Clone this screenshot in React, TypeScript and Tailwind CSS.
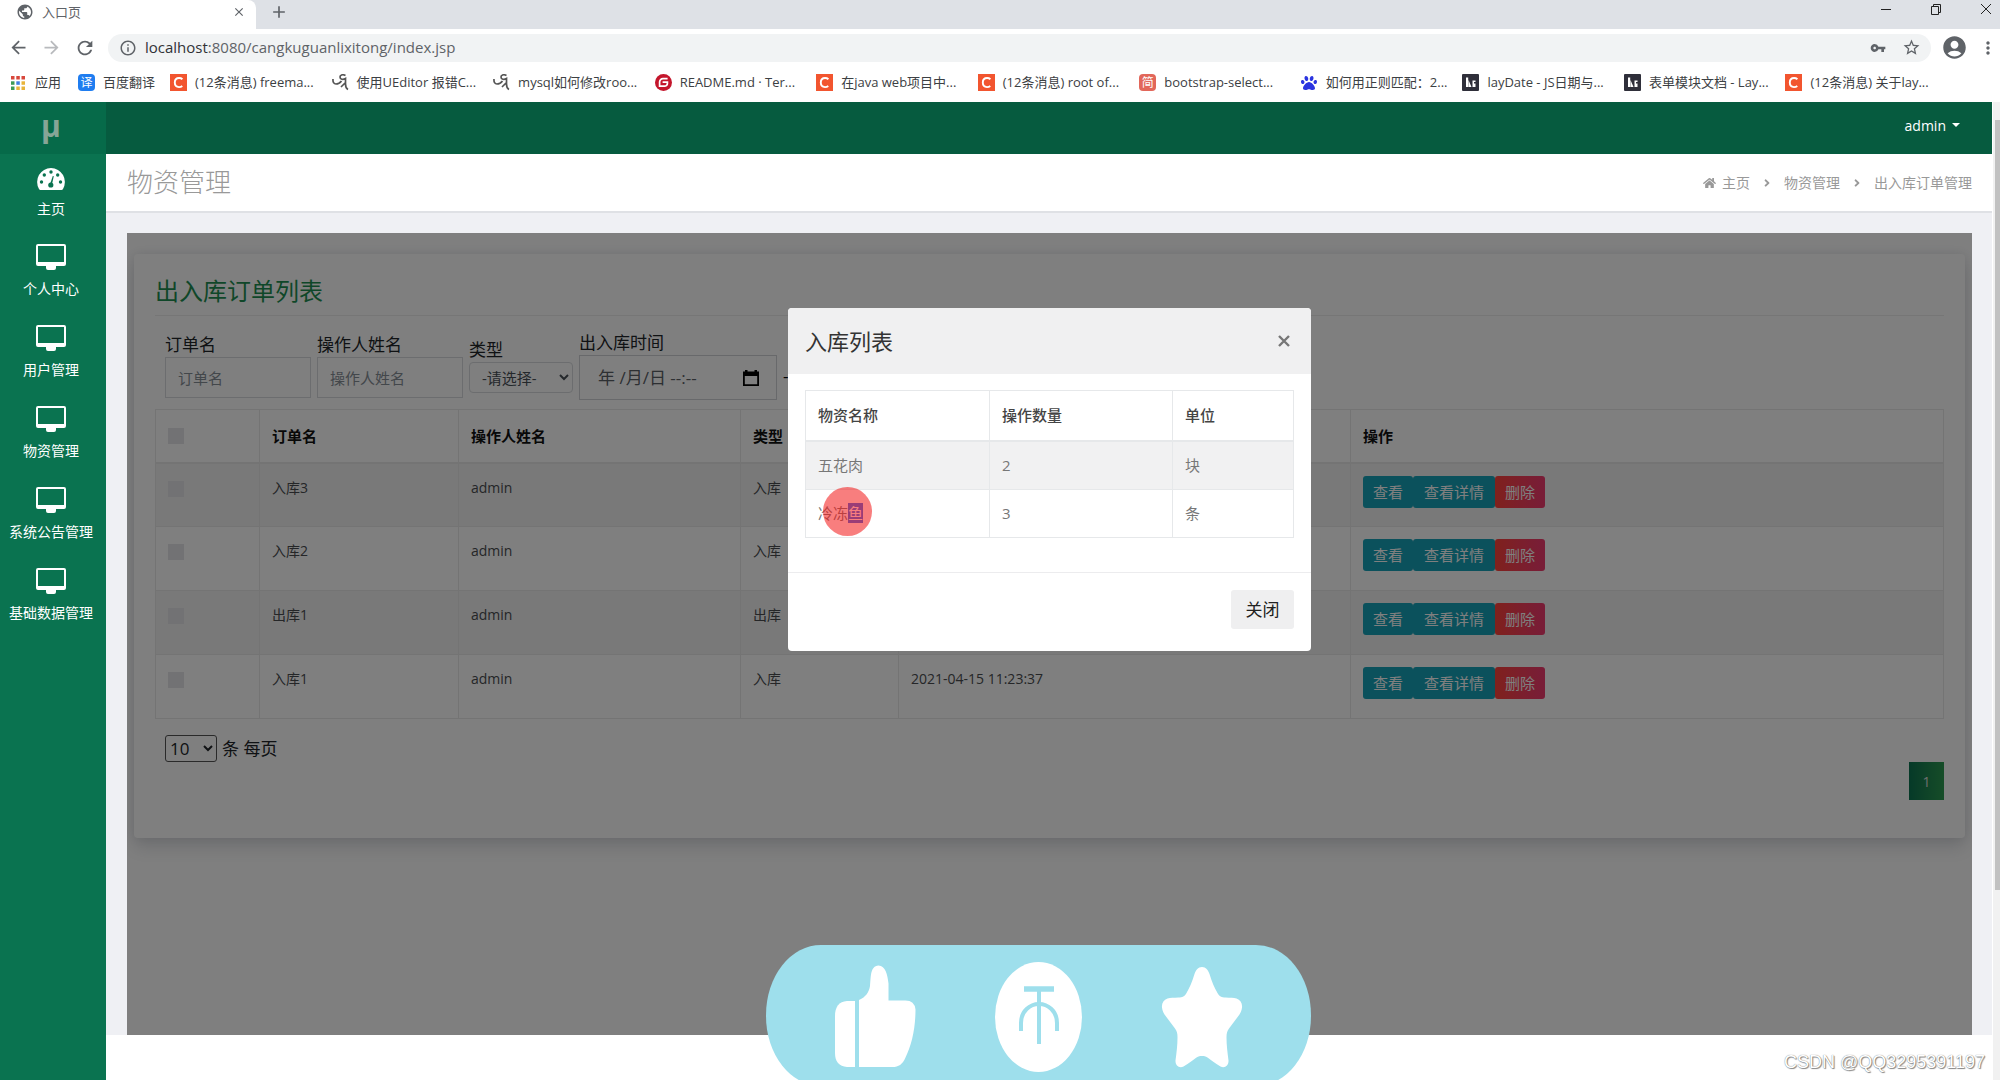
import { useState } from "react";
import type { ReactNode } from "react";
import {
    MdArrowBack,
    MdArrowForward,
    MdRefresh,
    MdInfoOutline,
    MdVpnKey,
    MdStarBorder,
    MdAccountCircle,
    MdMoreVert,
    MdPublic,
    MdClose,
    MdAdd,
} from "react-icons/md";
import { FaHome, FaPaw, FaAngleRight } from "react-icons/fa";

const menus = ["个人中心", "用户管理", "物资管理", "系统公告管理", "基础数据管理"];

const bookmarks = [
    { icon: "c", label: "(12条消息) freema..." },
    { icon: "ua", label: "使用UEditor 报错C..." },
    { icon: "ua", label: "mysql如何修改roo..." },
    { icon: "g", label: "README.md · Ter..." },
    { icon: "c", label: "在java web项目中..." },
    { icon: "c", label: "(12条消息) root of..." },
    { icon: "jian", label: "bootstrap-select..." },
    { icon: "paw", label: "如何用正则匹配：2..." },
    { icon: "lay", label: "layDate - JS日期与..." },
    { icon: "lay", label: "表单模块文档 - Lay..." },
    { icon: "c", label: "(12条消息) 关于lay..." },
];

const orders = [
    { name: "入库3", operator: "admin", type: "入库", time: "" },
    { name: "入库2", operator: "admin", type: "入库", time: "" },
    { name: "出库1", operator: "admin", type: "出库", time: "" },
    { name: "入库1", operator: "admin", type: "入库", time: "2021-04-15 11:23:37" },
];

function BookmarkIcon({ icon }: { icon: string }) {
    const box = "flex h-[17px] w-[17px] shrink-0 items-center justify-center";

    if (icon === "c") {
        return (
            <svg className="h-[17px] w-[17px] shrink-0" viewBox="0 0 17 17">
                <rect width="17" height="17" fill="#f2552f" />
                <path
                    d="M12.4 5.2C11.4 4.3 10.4 4 9.1 4 6.3 4 4.8 6 4.8 8.6c0 2.7 1.5 4.5 4.2 4.5 1.3 0 2.3-.3 3.3-1.1"
                    fill="none"
                    stroke="#fff"
                    strokeWidth="1.9"
                />
            </svg>
        );
    }
    if (icon === "g") {
        return (
            <svg className="h-[17px] w-[17px] shrink-0" viewBox="0 0 17 17">
                <circle cx="8.5" cy="8.5" r="8.5" fill="#c4162c" />
                <path
                    d="M12.6 4.6H8a3.4 3.4 0 0 0-3.4 3.4v4.2h5a2.8 2.8 0 0 0 2.8-2.8V8.2H7.6"
                    fill="none"
                    stroke="#fff"
                    strokeWidth="1.7"
                />
            </svg>
        );
    }
    if (icon === "ua") {
        return (
            <svg className="h-[17px] w-[17px] shrink-0" viewBox="0 0 17 17">
                <path
                    d="M1 5c-.3 3 .8 5 3 5 2.500 0 4-1 5.500-3M13.500 1.500c-3-1.500-5.500-.5-5.500 1.500 0 2.500 3 3 5.500 1.500v5.500c0 3 .5 4.500 2.500 5.500M13 9l-4 4"
                    fill="none"
                    stroke="#555"
                    strokeWidth="1.7"
                />
            </svg>
        );
    }
    if (icon === "lay") {
        return (
            <svg className="h-[17px] w-[17px] shrink-0" viewBox="0 0 17 17">
                <rect width="17" height="17" rx="1" fill="#2f2f3a" />
                <path d="M4 3.5h2.2V13H4zM6.500 6l3 7h-3zM10.500 6.500h3V8h-1.500v1.500h1.500V13h-3z" fill="#fff" />
            </svg>
        );
    }
    if (icon === "paw") {
        return (
            <span className={box}>
                <FaPaw className="h-4 w-4 text-[#2b35e0]" />
            </span>
        );
    }
    return <span className={`${box} rounded-sm bg-[#e2675a] text-[12px] text-white`}>简</span>;
}

function BrowserBar() {
    return (
        <header className="shrink-0 bg-white text-[#5f6368]">
            <div className="flex h-[29px] items-start bg-[#dee1e6]">
                <div className="flex h-[29px] w-[256px] items-center rounded-tr-lg bg-white pr-[10px] pb-[6px] pl-4">
                    <MdPublic className="h-[18px] w-[18px]" />
                    <span className="ml-2 flex-1 text-[13px] leading-5">入口页</span>
                    <button type="button" aria-label="关闭标签页">
                        <MdClose className="h-[14px] w-[14px]" />
                    </button>
                </div>
                <button type="button" aria-label="新标签页" className="mt-[2px] ml-[13px]">
                    <MdAdd className="h-5 w-5" />
                </button>
                <div className="ml-auto flex items-center gap-[36px] pt-[2px] pr-[7px] text-[#222]">
                    <button type="button" aria-label="最小化">
                        <svg className="h-[14px] w-[14px]" viewBox="0 0 14 14">
                            <path d="M2 7.500h10" stroke="currentColor" />
                        </svg>
                    </button>
                    <button type="button" aria-label="还原">
                        <svg className="h-[14px] w-[14px]" viewBox="0 0 14 14">
                            <path
                                d="M2.500 4.500h7v8h-7zM4.500 4.500v-2h7v8h-2"
                                fill="none"
                                stroke="currentColor"
                            />
                        </svg>
                    </button>
                    <button type="button" aria-label="关闭">
                        <svg className="h-[14px] w-[14px]" viewBox="0 0 14 14">
                            <path d="M2 2l10 10M12 2L2 12" stroke="currentColor" />
                        </svg>
                    </button>
                </div>
            </div>

            <div className="flex h-[37px] items-center pr-[2px] pl-2">
                <button type="button" aria-label="后退">
                    <MdArrowBack className="h-[21px] w-[21px]" />
                </button>
                <button type="button" aria-label="前进" className="ml-3 text-[#b8babd]">
                    <MdArrowForward className="h-[21px] w-[21px]" />
                </button>
                <button type="button" aria-label="刷新" className="ml-3">
                    <MdRefresh className="h-[22px] w-[22px]" />
                </button>
                <div className="ml-3 flex h-7 flex-1 items-center rounded-full bg-[#f1f3f4] pr-[10px] pl-[11px]">
                    <MdInfoOutline className="h-[18px] w-[18px]" />
                    <span className="ml-2 flex-1 text-[15px]">
                        <span className="text-[#303236]">localhost</span>
                        :8080/cangkuguanlixitong/index.jsp
                    </span>
                    <MdVpnKey className="h-4 w-4" />
                    <MdStarBorder className="ml-4 h-[19px] w-[19px]" />
                </div>
                <MdAccountCircle className="ml-[10px] h-[27px] w-[27px]" />
                <MdMoreVert className="ml-[10px] h-5 w-5" />
            </div>

            <nav className="flex h-9 items-center pr-[53px] pb-[3px] pl-[10px] text-[13px] text-[#3c4043]">
                <a href="#" className="flex w-[68px] items-center gap-[9px]">
                    <svg className="h-4 w-4" viewBox="0 0 16 16">
                        <path d="M1 1h3.500v3.500H1zM6.300 1h3.500v3.500H6.300zM11.500 1H15v3.500h-3.500z" fill="#d8483c" />
                        <path d="M1 6.300h3.500v3.500H1z" fill="#3d9a56" />
                        <path d="M6.300 6.300h3.500v3.500H6.300z" fill="#3f7fe0" />
                        <path d="M11.500 6.300H15v3.500h-3.500z" fill="#e8b43a" />
                        <path d="M1 11.500h3.500V15H1z" fill="#3d9a56" />
                        <path d="M6.300 11.500h3.500V15H6.300zM11.500 11.500H15V15h-3.500z" fill="#e8b43a" />
                    </svg>
                    应用
                </a>
                <a href="#" className="flex w-[92px] items-center gap-2">
                    <span className="flex h-[17px] w-[17px] items-center justify-center rounded-sm bg-[#1f7df0] text-[12px] text-white">
                        译
                    </span>
                    百度翻译
                </a>
                {bookmarks.map((b, i) => (
                    <a
                        key={i}
                        href="#"
                        className="flex min-w-0 flex-1 items-center gap-2 whitespace-nowrap"
                    >
                        <BookmarkIcon icon={b.icon} />
                        {b.label}
                    </a>
                ))}
            </nav>
        </header>
    );
}

function Sidebar() {
    return (
        <aside className="w-[106px] shrink-0 bg-[#0a7350] text-white">
            <div className="flex h-[52px] items-center justify-center bg-[#066a49] pr-1 pb-[6px] text-[30px] font-bold text-[#86a596]">
                μ
            </div>
            <nav className="flex flex-col pr-1">
                <a href="#" className="flex h-[81px] flex-col items-center pt-[14px]">
                    <svg className="h-[22px] w-[28px]" viewBox="0 0 28 22">
                        <path
                            d="M14 0a14 14 0 0 0-12 21q.5 1 1.500 1h21q1 0 1.500-1A14 14 0 0 0 14 0z"
                            fill="#fff"
                        />
                        <g fill="#0a7350">
                            <circle cx="4.5" cy="14" r="1.7" />
                            <circle cx="7.3" cy="7" r="1.7" />
                            <circle cx="14" cy="4" r="1.7" />
                            <circle cx="20.7" cy="7" r="1.7" />
                            <circle cx="23.5" cy="14" r="1.7" />
                            <circle cx="13.8" cy="17" r="2.6" />
                            <path d="M15.800 8l1 .3-1.800 8h-2z" />
                        </g>
                    </svg>
                    <span className="mt-[9px] text-[14px] leading-5">主页</span>
                </a>
                {menus.map((m) => (
                    <a key={m} href="#" className="flex h-[81px] flex-col items-center pt-[9px]">
                        <svg className="h-[26px] w-[30px]" viewBox="0 0 30 26">
                            <path
                                fillRule="evenodd"
                                d="M2 0h26q2 0 2 2v18q0 2-2 2h-8v2q0 2-2 2h-6q-2 0-2-2v-2H2q-2 0-2-2V2q0-2 2-2zM2 2v16h26V2z"
                                fill="#fff"
                            />
                        </svg>
                        <span className="mt-[9px] text-[14px] leading-5">{m}</span>
                    </a>
                ))}
            </nav>
        </aside>
    );
}

function Field({ id, label, children }: { id: string; label: string; children: ReactNode }) {
    return (
        <div className="flex flex-col">
            <label htmlFor={id} className="text-[17px] leading-6 text-[#212529]">
                {label}
            </label>
            {children}
        </div>
    );
}

function OrderCard() {
    const th = "border border-[#e8e8e8] border-b-2 px-3 text-left text-[15px] font-bold";
    const td = "border border-[#e8e8e8] px-3 pt-3 align-top";
    const check = "block h-4 w-4 appearance-none bg-[#e4e4e8]";

    return (
        <section className="mx-[7px] mt-[21px] h-[584px] rounded-sm bg-white px-[21px] pt-[17px] shadow-[0_10px_18px_rgba(60,66,90,0.16),0_0_12px_rgba(60,66,90,0.12)]">
            <h2 className="border-b border-[#ececec] pb-1 text-[24px] leading-10 text-[#1f8f52]">
                出入库订单列表
            </h2>
            <form className="mt-[15px] flex h-[69px] items-center gap-[6px] px-[10px]">
                <Field id="orderName" label="订单名">
                    <input
                        id="orderName"
                        placeholder="订单名"
                        className="h-[41px] w-[146px] border border-[#d8dade] px-3 text-[15px] placeholder:text-[#868e96]"
                    />
                </Field>
                <Field id="operator" label="操作人姓名">
                    <input
                        id="operator"
                        placeholder="操作人姓名"
                        className="h-[41px] w-[146px] border border-[#d8dade] px-3 text-[15px] placeholder:text-[#868e96]"
                    />
                </Field>
                <Field id="type" label="类型">
                    <select
                        id="type"
                        className="h-[31px] w-[104px] rounded-sm border border-[#d8dade] pl-2 text-[15px] text-[#495057]"
                    >
                        <option>-请选择-</option>
                    </select>
                </Field>
                <Field id="time" label="出入库时间">
                    <div className="flex h-[45px] w-[198px] items-center border border-[#d0d2d6] pr-4 pl-[18px]">
                        <input
                            id="time"
                            placeholder="年 /月/日 --:--"
                            className="w-full min-w-0 text-[17px] placeholder:text-[#5a6066]"
                        />
                        <svg className="h-[18px] w-[18px] shrink-0" viewBox="0 0 18 18">
                            <path
                                d="M3 1h2.500v1.500h7V1H15v1.500h2V17H1V2.500h2zM2.800 7v8.300h12.400V7z"
                                fillRule="evenodd"
                                fill="#000"
                            />
                        </svg>
                    </div>
                </Field>
                <span className="mt-5 text-[17px]">-</span>
            </form>

            <table className="mt-[9px] w-full table-fixed border-collapse text-[14px] leading-6">
                <colgroup>
                    <col className="w-[104px]" />
                    <col className="w-[199px]" />
                    <col className="w-[282px]" />
                    <col className="w-[158px]" />
                    <col className="w-[452px]" />
                    <col />
                </colgroup>
                <thead>
                    <tr className="h-[53px] text-[#111]">
                        <th className={th}>
                            <input type="checkbox" aria-label="全选" className={check} />
                        </th>
                        <th className={th}>订单名</th>
                        <th className={th}>操作人姓名</th>
                        <th className={th}>类型</th>
                        <th className={th}></th>
                        <th className={th}>操作</th>
                    </tr>
                </thead>
                <tbody className="text-[#4a4d50]">
                    {orders.map((o) => (
                        <tr key={o.name} className="h-16 odd:bg-[#f2f2f2]">
                            <td className={td}>
                                <input
                                    type="checkbox"
                                    aria-label={o.name}
                                    className={`mt-[5px] ${check}`}
                                />
                            </td>
                            <td className={td}>{o.name}</td>
                            <td className={td}>{o.operator}</td>
                            <td className={td}>{o.type}</td>
                            <td className={td}>{o.time}</td>
                            <td className={td}>
                                <div className="flex text-[15px] text-white">
                                    <button type="button" className="h-8 rounded-[3px] bg-[#17a2b8] px-[10px]">
                                        查看
                                    </button>
                                    <button type="button" className="h-8 rounded-[3px] bg-[#17a2b8] px-[11px]">
                                        查看详情
                                    </button>
                                    <button
                                        type="button"
                                        className="h-8 rounded-[3px] bg-linear-to-r from-[#ff4238] to-[#f03a70] px-[10px]"
                                    >
                                        删除
                                    </button>
                                </div>
                            </td>
                        </tr>
                    ))}
                </tbody>
            </table>

            <div className="mt-4 flex items-center gap-[5px] px-[10px] text-[17px] text-[#212529]">
                <select
                    id="pageSize"
                    className="h-[27px] w-[52px] rounded-[3px] border border-[#555] bg-white text-[17px]"
                >
                    <option>10</option>
                </select>
                <label htmlFor="pageSize">条 每页</label>
            </div>
            <div className="flex justify-end">
                <button
                    type="button"
                    className="h-[38px] w-[35px] bg-linear-to-r from-[#0a7350] to-[#2c9a50] text-[14px] text-[#ddd]"
                >
                    1
                </button>
            </div>
        </section>
    );
}

function DetailModal({ onClose }: { onClose: () => void }) {
    const cell = "border border-[#e6e8ea] px-3";

    return (
        <div className="absolute inset-0 flex items-start justify-center bg-black/50 pt-[75px]">
            <div role="dialog" aria-label="入库列表" className="w-[523px] rounded-[4px] bg-white">
                <div className="flex h-[66px] items-center justify-between rounded-t-[4px] bg-[#f0f0f1] pr-[19px] pl-[17px]">
                    <h3 className="text-[22px] text-[#333]">入库列表</h3>
                    <button type="button" aria-label="关闭窗口" onClick={onClose}>
                        <svg className="h-4 w-4" viewBox="0 0 16 16">
                            <path d="M3 3l10 10M13 3L3 13" stroke="#777" strokeWidth="2.4" />
                        </svg>
                    </button>
                </div>
                <div className="px-[17px] pt-4 pb-[34px]">
                    <table className="w-full table-fixed border-collapse text-[15px] text-[#777]">
                        <colgroup>
                            <col className="w-[184px]" />
                            <col className="w-[183px]" />
                            <col />
                        </colgroup>
                        <thead>
                            <tr className="h-[50px] text-left text-[#444]">
                                <th className={`${cell} border-b-2 font-medium`}>物资名称</th>
                                <th className={`${cell} border-b-2 font-medium`}>操作数量</th>
                                <th className={`${cell} border-b-2 font-medium`}>单位</th>
                            </tr>
                        </thead>
                        <tbody>
                            <tr className="h-[49px] bg-[#f1f1f2]">
                                <td className={cell}>五花肉</td>
                                <td className={cell}>2</td>
                                <td className={cell}>块</td>
                            </tr>
                            <tr className="h-12">
                                <td className={`${cell} relative`}>
                                    冷冻
                                    <mark className="bg-[#3070f0] text-white">鱼</mark>
                                    {/* click highlight */}
                                    <span className="absolute -top-[3px] left-[17px] h-[49px] w-[49px] rounded-full bg-[#f31414]/55"></span>
                                </td>
                                <td className={cell}>3</td>
                                <td className={cell}>条</td>
                            </tr>
                        </tbody>
                    </table>
                </div>
                <div className="flex h-[79px] items-start justify-end border-t border-[#ececee] px-[17px] pt-[17px]">
                    <button
                        type="button"
                        onClick={onClose}
                        className="h-[39px] w-[63px] rounded-[3px] bg-[#efeff0] text-[17px] text-[#212121]"
                    >
                        关闭
                    </button>
                </div>
            </div>
        </div>
    );
}

function LikeBanner() {
    return (
        <svg
            className="absolute bottom-0 left-1/2 -ml-[234px] h-[135px] w-[545px]"
            viewBox="0 0 545 135"
        >
            <rect width="545" height="141" rx="55" ry="70" fill="#9edfec" />
            <g fill="#fff">
                <path d="M89 56v66h-8q-12-1-12-14V71q0-14 12-15z" />
                <path d="M93 55c7-3 10-8 11-14 1-9 0-20 8.500-20.500 7 .5 9 9 10 18v17h17q9 0 10 9c0 19-4 36-10 48-3 7-7 9.500-13 9.500H93z" />
                <ellipse cx="272.5" cy="72" rx="43.5" ry="55" />
                <path d="M436 22c-4 0-6 3-7.500 7-2.500 8-5 14-8 19-2 3.500-4 4.500-8 4.500-5 .3-8 0-11 1-4 1.500-6 5-5.500 9 .3 3 1.500 6 4 9 3 4 6 8 9 12 2 2.500 2.500 5 2.500 9 0 8-1 15-2 23-.3 5 3.500 8 8 6 5-3 9-6 13-9 2-1.300 3.500-1.500 5.500-1.500s3.500.2 5.500 1.500c4 3 8 6 13 9 4.500 2 8.300-1 8-6-1-8-2-15-2-23 0-4 .5-6.500 2.500-9 3-4 6-8 9-12 2.500-3 3.700-6 4-9 .5-4-1.500-7.500-5.500-9-3-1-6-.7-11-1-4 0-6-1-8-4.500-3-5-5.500-11-8-19-1.500-4-3.500-7-7.500-7z" />
            </g>
            <g fill="none" stroke="#9edfec" strokeWidth="4">
                <path d="M258 44h30" strokeWidth="5.5" />
                <path d="M273 46v53" />
                <path d="M255 86V78C255 66 264 59 273 59s18 7 18 19v8" />
            </g>
        </svg>
    );
}

function App() {
    const [modalIsOpen, setModalIsOpen] = useState<boolean>(true);

    return (
        <div className="relative flex h-screen flex-col overflow-hidden bg-white font-['Open_Sans','Noto_Sans_CJK_SC',sans-serif]">
            <BrowserBar />
            <div className="flex min-h-0 flex-1">
                <Sidebar />
                <div className="flex min-w-0 flex-1 flex-col">
                    <div className="flex h-[52px] shrink-0 items-center justify-end bg-[#065b3f] pr-8">
                        <button type="button" className="flex items-center gap-[6px] pb-[6px] text-[14px] text-white">
                            admin
                            <span className="border-x-4 border-t-4 border-x-transparent border-t-white"></span>
                        </button>
                    </div>
                    <div className="flex h-[59px] shrink-0 items-center justify-between border-b-2 border-[#dfe1e5] pr-5 pl-[21px] text-[#999]">
                        <h1 className="text-[26px] font-light">物资管理</h1>
                        <nav className="flex items-center text-[14px]">
                            <FaHome className="mr-[6px] h-3 w-[13px]" />
                            <a href="#">主页</a>
                            <FaAngleRight className="mx-[14px] h-3 w-[6px]" />
                            <a href="#">物资管理</a>
                            <FaAngleRight className="mx-[14px] h-3 w-[6px]" />
                            <span>出入库订单管理</span>
                        </nav>
                    </div>
                    <main className="flex min-h-0 flex-1 bg-[#eff0f4] pt-5 pr-5 pl-[21px]">
                        <div className="relative flex-1 overflow-hidden bg-white">
                            <OrderCard />
                            {modalIsOpen && <DetailModal onClose={() => setModalIsOpen(false)} />}
                        </div>
                    </main>
                    <footer className="flex h-[45px] shrink-0 items-center justify-end bg-white pt-[10px] pr-[7px] font-['Liberation_Sans',sans-serif] text-[18px] text-white [text-shadow:0_0_1px_#666,1px_1px_1px_#888]">
                        CSDN @QQ3295391197
                    </footer>
                </div>
                <div className="flex w-2 shrink-0 flex-col items-end border-l border-white bg-[#f1f1f1] pt-[18px]">
                    <div className="h-[770px] w-[5px] bg-[#c1c1c1]"></div>
                </div>
            </div>
            <LikeBanner />
        </div>
    );
}

export default App;
